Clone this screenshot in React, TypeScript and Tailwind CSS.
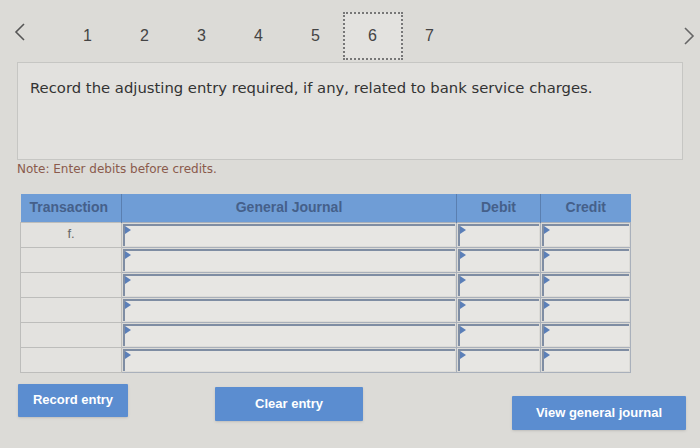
import React from "react";

const Tri = () => (
  <svg width="6" height="8" viewBox="0 0 6 8" className="absolute left-0 top-0">
    <path d="M0 0 L6 4 L0 8 Z" fill="#5b7fb8" />
  </svg>
);

const InputCell = () => (
  <td className="p-0 border border-[#a9b0bb] h-[25px]">
    <div className="relative h-[22px] mx-[1px] border-t-2 border-l-2 border-[#7f8da3] bg-[#e7e6e3]">
      <Tri />
    </div>
  </td>
);

export default function App() {
  const nums = ["1", "2", "3", "4", "5", "6", "7"];
  return (
    <div
      className="w-[700px] h-[448px] overflow-hidden bg-[#dcdbd7] relative"
      style={{ fontFamily: "'Liberation Sans', Arial, sans-serif" }}
    >
      {/* nav */}
      <div className="flex items-center h-[48px] mt-[12px] relative">
        <svg width="12" height="18" viewBox="0 0 12 18" className="ml-[14px] -mt-[8px]">
          <path d="M10 1 L2 9 L10 17" fill="none" stroke="#555" strokeWidth="1.6" />
        </svg>
        <div className="flex ml-[33px]">
          {nums.map((n) => (
            <div
              key={n}
              className={
                n === "6"
                  ? "w-[60px] h-[48px] flex items-center justify-center border-2 border-dotted border-[#777] bg-[#e3e2df] text-[16px] text-[#444] -mx-[1.5px]"
                  : "w-[57px] h-[48px] flex items-center justify-center text-[16px] text-[#444]"
              }
            >
              {n}
            </div>
          ))}
        </div>
        <svg width="12" height="18" viewBox="0 0 12 18" className="absolute right-[5px] top-[15px]">
          <path d="M2 1 L10 9 L2 17" fill="none" stroke="#666" strokeWidth="1.6" />
        </svg>
      </div>

      {/* question */}
      <div className="mx-[17px] mt-[2px] h-[98px] border border-[#c6c6c3] bg-[#e2e1de] pt-[14px] pl-[12px]">
        <p className="text-[14.8px] text-[#333]" style={{ fontFamily: "'DejaVu Sans', sans-serif" }}>
          Record the adjusting entry required, if any, related to bank service charges.
        </p>
      </div>

      <p className="ml-[17px] mt-[0px] text-[12px] text-[#8a5a4c]" style={{ fontFamily: "'DejaVu Sans', sans-serif" }}>
        Note: Enter debits before credits.
      </p>

      {/* table */}
      <table className="ml-[20px] mt-[16px] border-collapse w-[611px]">
        <thead>
          <tr className="bg-[#6f9dd6] h-[28px]">
            <th className="w-[101px] border-r border-[#5a7fb0] text-left pl-[9px] text-[14px] font-bold text-[#45608a]">Transaction</th>
            <th className="w-[335px] border-r border-[#5a7fb0] text-center text-[14px] font-bold text-[#45608a]">General Journal</th>
            <th className="w-[84px] border-r border-[#5a7fb0] text-center text-[14px] font-bold text-[#45608a]">Debit</th>
            <th className="text-center text-[14px] font-bold text-[#45608a]">Credit</th>
          </tr>
        </thead>
        <tbody>
          {[0, 1, 2, 3, 4, 5].map((i) => (
            <tr key={i}>
              <td className="h-[25px] border border-[#bdbdbb] bg-[#e3e2df] text-center text-[13px] text-[#666] align-top pt-[1px]">
                {i === 0 ? "f." : ""}
              </td>
              <InputCell />
              <InputCell />
              <InputCell />
            </tr>
          ))}
        </tbody>
      </table>

      {/* buttons */}
      <div className="flex items-start mt-[11px] ml-[18px]">
        <button className="w-[110px] h-[33px] bg-[#5b8dd0] text-white text-[13px] font-bold rounded-[1px] shadow-sm">
          Record entry
        </button>
        <button className="ml-[87px] mt-[3px] w-[148px] h-[34px] bg-[#5b8dd0] text-white text-[13px] font-bold rounded-[1px] shadow-sm">
          Clear entry
        </button>
        <button className="ml-[149px] mt-[12px] w-[174px] h-[34px] bg-[#5b8dd0] text-white text-[13px] font-bold rounded-[1px] shadow-sm">
          View general journal
        </button>
      </div>
    </div>
  );
}
